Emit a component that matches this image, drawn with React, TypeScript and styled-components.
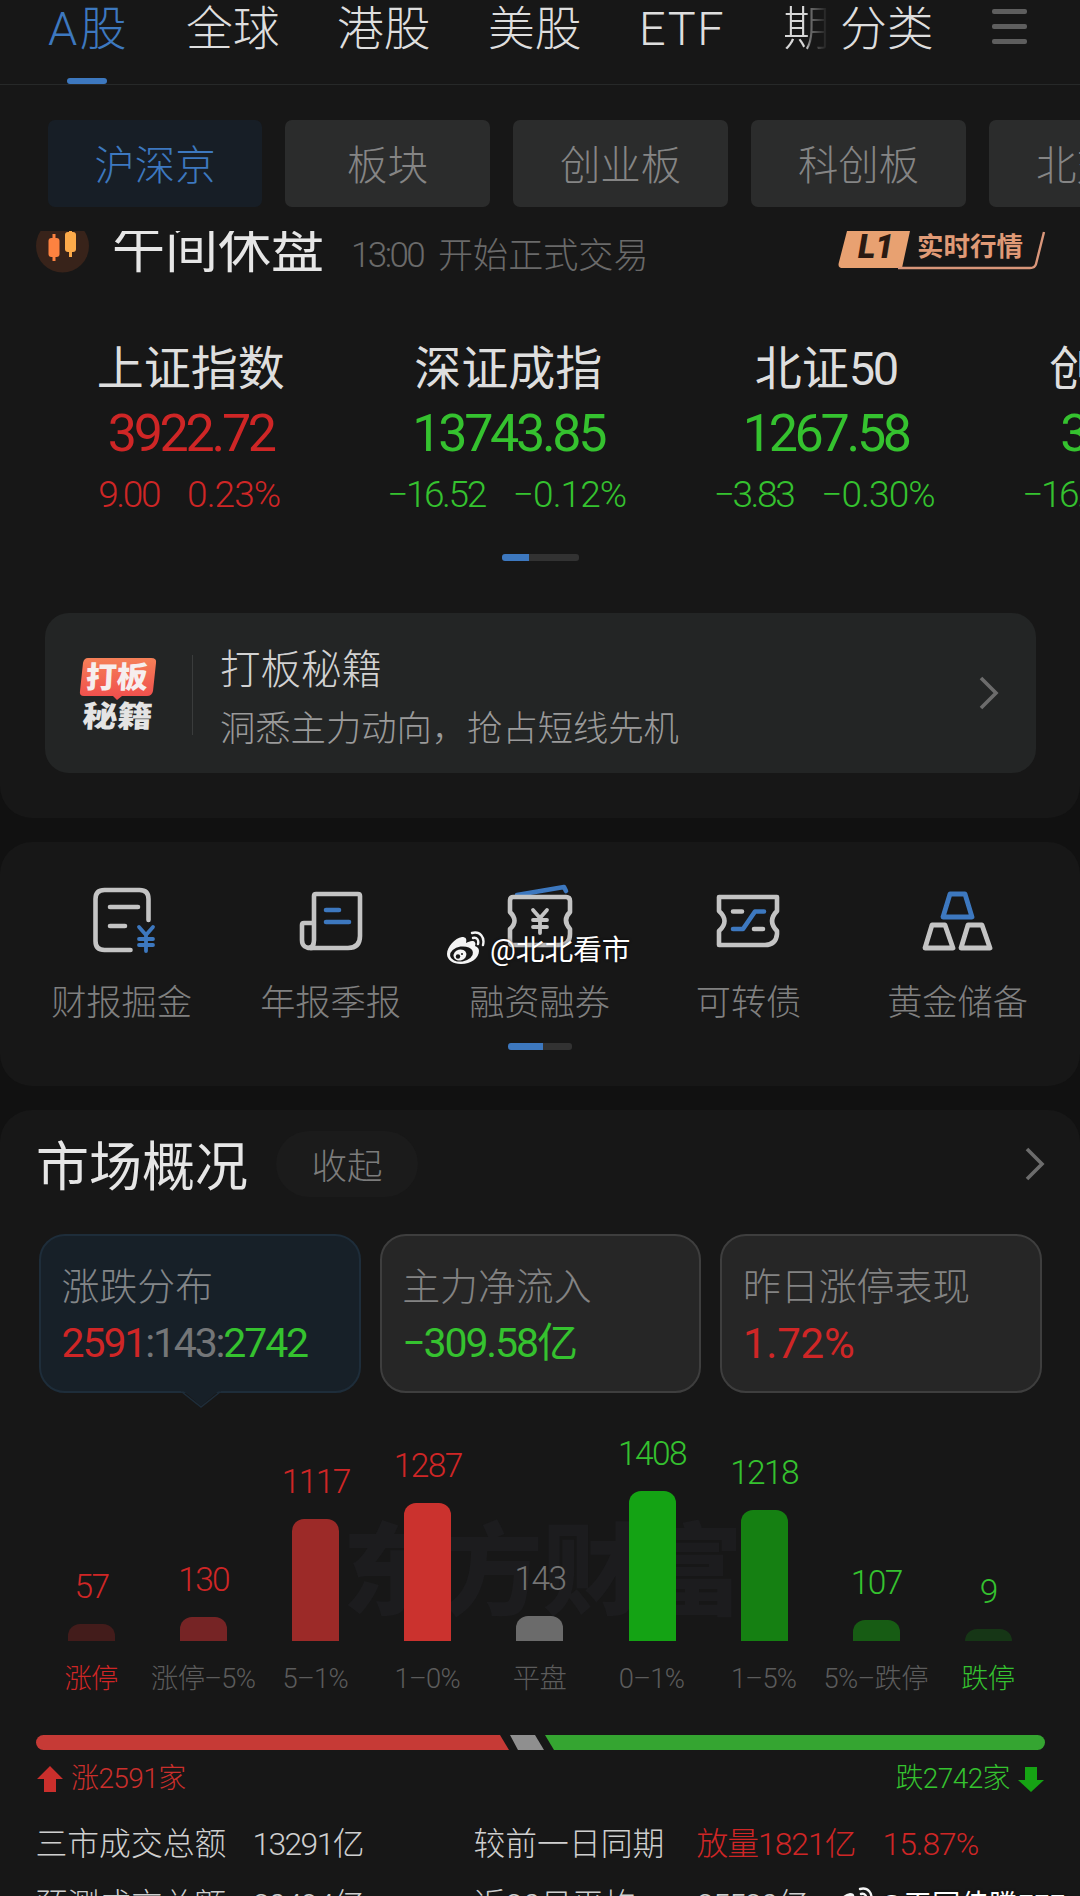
import React from "react";
import styled, { createGlobalStyle } from "styled-components";

const RED = "#cf2626";
const GREEN = "#35c22f";
const BLUE = "#3d78bf";

const GlobalStyle = createGlobalStyle`
  * { box-sizing: border-box; }
  html, body { margin: 0; padding: 0; background: #111111; }
  body {
    width: 1080px; height: 1896px; overflow: hidden;
    font-family: Roboto, "Noto Sans CJK SC", sans-serif;
    font-weight: 300;
    color: #dcdcdc;
  }
`;

const Screen = styled.main`
  position: relative;
  width: 1080px;
  height: 1896px;
  overflow: hidden;
  display: flex;
  flex-direction: column;
  gap: 24px;
`;

const Panel = styled.section<{ $h: number; $first?: boolean }>`
  flex: none;
  height: ${(p) => p.$h}px;
  background: #171717;
  border-radius: ${(p) => (p.$first ? "0 0 32px 32px" : "32px")};
  overflow: hidden;
`;

const Text = styled.span<{ $size: number; $color?: string; $ls?: number; $w?: number }>`
  display: inline-block;
  white-space: pre;
  font-size: ${(p) => p.$size}px;
  line-height: ${(p) => Math.round(p.$size * 1.2)}px;
  letter-spacing: ${(p) => p.$ls ?? 0}px;
  font-weight: ${(p) => p.$w ?? 300};
  color: ${(p) => p.$color ?? "inherit"};
`;

/* top navigation */
const Nav = styled.nav`
  height: 85px;
  display: flex;
  align-items: flex-start;
  border-bottom: 1px solid #272929;
  padding-left: 48px;
`;
const NavItem = styled.div<{ $width: number; $active?: boolean; $fade?: boolean; $ls?: number }>`
  flex: none;
  width: ${(p) => p.$width}px;
  height: 84px;
  font-size: 46.8px;
  line-height: 58px;
  letter-spacing: ${(p) => p.$ls ?? 0}px;
  white-space: nowrap;
  color: ${(p) => (p.$active ? BLUE : "#dedede")};
  ${(p) =>
    p.$fade &&
    `background: linear-gradient(90deg, #d8d8d8 50%, #6a6a6a 60%, #262626 92%) no-repeat 0 0 / 46px 100%;
     -webkit-background-clip: text; background-clip: text; color: transparent;`}
`;
const Underline = styled.div`
  width: 40px;
  height: 6px;
  margin: 20px 0 0 19px;
  border-radius: 3px;
  background: ${BLUE};
`;
const MenuIcon = styled.div`
  width: 35px;
  margin-top: 9px;
  display: flex;
  flex-direction: column;
  gap: 10px;
  i { height: 5px; border-radius: 2px; background: #5e5e5e; }
`;

/* market chips */
const Chips = styled.div`
  display: flex;
  gap: 23px;
  padding: 35px 0 0 48px;
  height: 146px;
`;
const Chip = styled.div<{ $width: number; $active?: boolean }>`
  flex: none;
  width: ${(p) => p.$width}px;
  height: 87px;
  line-height: 93px;
  text-align: center;
  font-size: 40.4px;
  border-radius: 7px;
  background: ${(p) => (p.$active ? "#171e26" : "#2b2c2c")};
  color: ${(p) => (p.$active ? BLUE : "#858585")};
`;

/* session status */
const StatusRow = styled.div`
  height: 44px;
  overflow: hidden;
  display: flex;
  align-items: flex-start;
  padding-left: 36px;
`;
const StatusIcon = styled.svg`
  flex: none;
  width: 53px;
  height: 44px;
  margin-right: 23px;
`;
const StatusTitle = styled.div`
  width: 239px;
  margin-top: -13px;
  font-size: 53px;
  line-height: 64px;
  font-weight: 400;
  color: #e6e6e6;
  white-space: nowrap;
`;
const StatusHint = styled.div`
  display: flex;
  gap: 15px;
  width: 487px;
  margin-top: 4px;
`;
const QuoteBadge = styled.div`
  position: relative;
  width: 208px;
  height: 40px;
  color: #e09a76;
  svg { display: block; }
`;
const BadgeText = styled.span`
  position: absolute;
  left: 79px;
  top: 1px;
  font-size: 26.5px;
  line-height: 30px;
  font-weight: 600;
  white-space: nowrap;
`;
const BadgeLevel = styled.span`
  position: absolute;
  left: 20px;
  top: -1px;
  font: italic 900 33px/34px Roboto, "Liberation Sans", sans-serif;
  color: #2a1a12;
`;

/* indices */
const Indices = styled.div`
  display: flex;
  height: 279px;
  padding-top: 63px;
  margin-left: 32px;
`;
const IndexCol = styled.div<{ $color: string }>`
  flex: none;
  width: 317.5px;
  display: flex;
  flex-direction: column;
  align-items: center;
  color: ${(p) => p.$color};
`;
const IndexName = styled.div`
  font-size: 47px;
  line-height: 62px;
  font-weight: 400;
  color: #dedede;
  white-space: nowrap;
  span { letter-spacing: -2.4px; }
`;
const IndexValue = styled.div`
  margin-top: 2px;
  font-size: 52px;
  line-height: 64px;
  font-weight: 400;
  letter-spacing: -3.3px;
`;
const IndexChange = styled.div`
  margin-top: 7px;
  margin-left: -3px;
  display: flex;
  gap: 28px;
  font-size: 37px;
  line-height: 44px;
  letter-spacing: -2.4px;
  white-space: nowrap;
`;
const IndexPercent = styled.span`
  letter-spacing: -0.9px;
`;
const Pager = styled.div<{ $width: number; $on: number }>`
  width: ${(p) => p.$width}px;
  height: 7px;
  margin: 0 auto;
  border-radius: 3px;
  background: linear-gradient(90deg, ${BLUE} ${(p) => p.$on}px, #323232 ${(p) => p.$on}px);
`;

/* promo */
const Promo = styled.div`
  display: flex;
  align-items: center;
  width: 991px;
  height: 160px;
  margin: 52px 0 0 45px;
  border-radius: 24px;
  background: #232525;
`;
const PromoIcon = styled.svg`
  width: 80px;
  height: 80px;
  margin-left: 33px;
`;
const Divider = styled.div`
  width: 1px;
  height: 80px;
  margin: 4px 27px 0 34px;
  background: #3a3c3c;
`;
const PromoText = styled.div`
  flex: 1;
  display: flex;
  flex-direction: column;
  gap: 13px;
  padding-top: 10px;
`;
const Chevron = styled.svg<{ $mr: number }>`
  width: 22px;
  height: 36px;
  margin-right: ${(p) => p.$mr}px;
`;

/* shortcuts */
const Shortcuts = styled.div`
  display: flex;
  margin: 37px 0 0 17px;
  height: 164px;
`;
const Shortcut = styled.div`
  width: 209px;
  display: flex;
  flex-direction: column;
  align-items: center;
  gap: 23px;
  svg { width: 80px; height: 80px; }
`;

/* overview */
const OverviewHead = styled.div`
  display: flex;
  align-items: center;
  height: 66px;
  margin: 21px 34px 0 36px;
`;
const OverviewTitle = styled.h2`
  margin: 8px 0 0;
  font-size: 53px;
  line-height: 64px;
  font-weight: 400;
  color: #e6e6e6;
`;
const Pill = styled.div`
  width: 142px;
  height: 66px;
  margin: 0 auto 0 28px;
  border-radius: 33px;
  background: #1b1b1b;
  text-align: center;
  font-size: 35.5px;
  line-height: 72px;
  color: #7c7c7c;
`;
const Stats = styled.div`
  display: flex;
  gap: 19px;
  margin: 37px 0 0 39px;
`;
const Stat = styled.div<{ $active?: boolean }>`
  position: relative;
  width: 321.7px;
  height: 159px;
  padding: 29px 0 0 20.5px;
  border-radius: 26px;
  border: 2px solid ${(p) => (p.$active ? "#1e2d3a" : "#3e3e3e")};
  background: ${(p) => (p.$active ? "#172028" : "#262626")};
  display: flex;
  flex-direction: column;
  gap: 9px;
`;
const Pointer = styled.svg`
  position: absolute;
  left: 139px;
  top: 154px;
  width: 42px;
  height: 18px;
`;
const Chart = styled.div`
  position: relative;
  display: flex;
  height: 248px;
  margin-left: 35.5px;
`;
const Watermark = styled.div`
  position: absolute;
  left: 307px;
  top: 115px;
  font-size: 100px;
  line-height: 130px;
  font-weight: 900;
  color: #1c1c1e;
  white-space: nowrap;
`;
const BarCol = styled.div`
  position: relative;
  width: 112.1px;
  display: flex;
  flex-direction: column;
  justify-content: flex-end;
  align-items: center;
`;
const Bar = styled.div<{ $h: number; $color: string }>`
  width: 47px;
  height: ${(p) => p.$h}px;
  margin-top: 17px;
  border-radius: 12px 12px 0 0;
  background: ${(p) => p.$color};
`;
const AxisRow = styled.div`
  display: flex;
  margin: 21px 0 0 35px;
  height: 34px;
`;
const AxisLabel = styled.div<{ $color: string }>`
  width: 112.1px;
  display: flex;
  justify-content: center;
  white-space: nowrap;
  font-size: 27.3px;
  line-height: 35px;
  letter-spacing: -0.7px;
  color: ${(p) => p.$color};
`;
const RatioBar = styled.svg`
  display: block;
  width: 1009px;
  height: 15px;
  margin: 39px 0 0 36px;
`;
const Legend = styled.div`
  display: flex;
  align-items: center;
  justify-content: space-between;
  height: 36px;
  margin: 11px 35px 0 36px;
`;
const LegendItem = styled.div<{ $color: string }>`
  display: flex;
  align-items: center;
  gap: 7px;
  color: ${(p) => p.$color};
  svg { width: 28px; height: 28px; }
`;
const Turnover = styled.div`
  display: grid;
  grid-template-columns: 217px 221px 223px 186px 1fr;
  grid-auto-rows: 61px;
  align-items: center;
  margin: 16px 0 0 35.5px;
`;

/* credit overlay */
const Credit = styled.div<{ $x: number; $y: number }>`
  position: absolute;
  left: ${(p) => p.$x}px;
  top: ${(p) => p.$y}px;
  display: flex;
  align-items: flex-start;
  gap: 5px;
  color: #fff;
  text-shadow: 0 0 3px rgba(0, 0, 0, 0.6);
  svg { width: 39px; height: 34px; }
  span { margin-top: 2px; }
`;

const Weibo = () => (
  <svg viewBox="0 0 39 34">
    <path
      d="M16 6C9 7 1 16 1 23c0 6 6 10 14 10 10 0 18-6 18-13 0-3-2-4-4-5 1-3 0-5-3-5-2 0-4 1-6 2 1-4 0-6-4-6z"
      fill="#f4f4f4"
    />
    <ellipse cx="15.500" cy="23" rx="11.500" ry="7.500" fill="#171717" transform="rotate(-8 15.500 23)" />
    <ellipse cx="14" cy="24" rx="6.500" ry="5.500" fill="#f4f4f4" transform="rotate(-15 14 24)" />
    <circle cx="12" cy="25.500" r="2.200" fill="#171717" />
    <circle cx="16" cy="23" r="1" fill="#171717" />
    <path d="M26 2c8-2 13 4 11 12M27 7c4-1 6 2 5 6" fill="none" stroke="#f4f4f4" strokeWidth="2.400" strokeLinecap="round" />
  </svg>
);

const W = "#c4c4c4";
const ic = { fill: "none", strokeWidth: 4.6, strokeLinecap: "round", strokeLinejoin: "round" } as const;

const shortcuts = [
  {
    label: "财报掘金",
    icon: (
      <svg viewBox="0 0 80 80" {...ic}>
        <path d="M68 41V20q0-9-9-9H24q-9 0-9 9v42q0 9 9 9h26" transform="translate(-1.500 0)" stroke={W} />
        <path d="M28 28h28M28 47h15" stroke={W} />
        <path d="M57 48l7 8 7-8M64 56v16M57 60h14M57 66h14" stroke={BLUE} strokeWidth="3.800" />
      </svg>
    ),
  },
  {
    label: "年报季报",
    icon: (
      <svg viewBox="0 0 80 80" {...ic}>
        <path d="M22 69q-11 1-11-8V46q0-2 2-2h10M23 61V17q0-2 2-2h42q2 0 2 2v40q0 12-12 12H17q6 0 6-8z" stroke={W} />
        <path d="M35 31h13M35 43h23" stroke={BLUE} />
      </svg>
    ),
  },
  {
    label: "融资融券",
    icon: (
      <svg viewBox="0 0 80 80" {...ic}>
        <path d="M17 16L64 8l2 4" stroke={BLUE} />
        <path d="M13 18h53q4 0 4 4v11q-8 8 0 17v5q0 11-11 11H13q-3 0-3-4V50q9-8 0-17V22q0-4 3-4z" stroke={W} />
        <path d="M33 31l7 8 7-8M40 39v15M33 41h14M33 48h14" stroke={W} strokeWidth="3.800" />
      </svg>
    ),
  },
  {
    label: "可转债",
    icon: (
      <svg viewBox="0 0 80 80" {...ic}>
        <path d="M10 18h58v14q-10 10 0 20v3q-1 11-12 11H10V52q11-10 0-20z" stroke={W} />
        <path d="M24 32.500h9M45 50h9" stroke={W} />
        <path d="M24 50h10l12-17.500h9" stroke={BLUE} />
      </svg>
    ),
  },
  {
    label: "黄金储备",
    icon: (
      <svg viewBox="0 0 80 80" {...ic} strokeWidth="4.800">
        <path d="M32 15h15l7 23H25z" stroke={BLUE} />
        <path d="M14 46h13l8 23H7zM50 46h14l8 23H43z" stroke={W} />
      </svg>
    ),
  },
];

const indices = [
  { name: "上证指数", value: "3922.72", diff: "9.00", pct: "0.23%", color: RED },
  { name: "深证成指", value: "13743.85", diff: "−16.52", pct: "−0.12%", color: GREEN },
  { name: "北证", suffix: "50", value: "1267.58", diff: "−3.83", pct: "−0.30%", color: GREEN },
  { name: "创业板指", value: "3887.21", diff: "−16.94", pct: "−0.43%", color: GREEN },
];

const bars = [
  { n: 57, h: 17, axis: "涨停", fill: "#431c1b", text: RED, axisColor: RED },
  { n: 130, h: 24, axis: "涨停–5%", fill: "#762425", text: RED },
  { n: 1117, h: 122, axis: "5–1%", fill: "#9c2a28", text: RED },
  { n: 1287, h: 138, axis: "1–0%", fill: "#cb322e", text: RED },
  { n: 143, h: 25, axis: "平盘", fill: "#6b6b6b", text: "#747474" },
  { n: 1408, h: 150, axis: "0–1%", fill: "#14a314", text: GREEN },
  { n: 1218, h: 131, axis: "1–5%", fill: "#158012", text: GREEN },
  { n: 107, h: 21, axis: "5%–跌停", fill: "#175c14", text: GREEN },
  { n: 9, h: 12, axis: "跌停", fill: "#163616", text: GREEN, axisColor: GREEN },
];

const Arrow = () => (
  <svg viewBox="0 0 28 28" fill="none" stroke="none">
    <path d="M14 1L27 14H20V27H8V14H1z" fill="currentColor" />
  </svg>
);
const ArrowDown = () => (
  <svg viewBox="0 0 28 28">
    <path d="M14 27L27 15H20V2H8V15H1z" fill="#16a314" />
  </svg>
);
const Right = ({ mr }: { mr: number }) => (
  <Chevron $mr={mr} viewBox="0 0 22 36">
    <path d="M3 3l15 15L3 33" fill="none" stroke="#6c6c6c" strokeWidth="3.600" />
  </Chevron>
);

export default function App() {
  return (
    <Screen>
      <GlobalStyle />
      <Panel $h={818} $first>
        <Nav>
          <NavItem $width={138} $active $ls={2.5}>
            A股
            <Underline />
          </NavItem>
          <NavItem $width={151}>全球</NavItem>
          <NavItem $width={151}>港股</NavItem>
          <NavItem $width={151}>美股</NavItem>
          <NavItem $width={144} $ls={1.6}>ETF</NavItem>
          <NavItem $width={57} $fade>期</NavItem>
          <NavItem $width={152}>分类</NavItem>
          <MenuIcon><i /><i /><i /></MenuIcon>
        </Nav>
        <Chips>
          <Chip $width={214} $active>沪深京</Chip>
          <Chip $width={205}>板块</Chip>
          <Chip $width={215}>创业板</Chip>
          <Chip $width={215}>科创板</Chip>
          <Chip $width={215}>北交所</Chip>
        </Chips>
        <StatusRow>
          <StatusIcon viewBox="0 0 53 44">
            <circle cx="26.500" cy="15" r="26.500" fill="#38231a" />
            <path d="M18 3v27" stroke="#fd8240" strokeWidth="3" />
            <rect x="12.500" y="7" width="11" height="19" rx="3" fill="#fd8240" />
            <path d="M34.500-2v28" stroke="#fdaa4a" strokeWidth="3" />
            <rect x="29" y="1" width="11" height="20" rx="3" fill="#fdaa4a" />
          </StatusIcon>
          <StatusTitle>午间休盘</StatusTitle>
          <StatusHint>
            <Text $size={35} $color="#6a6a6a" $ls={-2.6}>13:00</Text>
            <Text $size={35.1} $color="#6a6a6a">开始正式交易</Text>
          </StatusHint>
          <QuoteBadge>
            <svg width="208" height="40" viewBox="0 0 208 40">
              <path d="M9 0H72L64 37H5Q-1 37 1 31z" fill="#e8a171" />
              <path d="M60 37H192Q197 37 198 33L206 1" fill="none" stroke="#d9967a" strokeWidth="2.400" />
            </svg>
            <BadgeLevel>L1</BadgeLevel>
            <BadgeText>实时行情</BadgeText>
          </QuoteBadge>
        </StatusRow>
        <Indices>
          {indices.map((i) => (
            <IndexCol key={i.name} $color={i.color}>
              <IndexName>
                {i.name}
                {i.suffix && <span>{i.suffix}</span>}
              </IndexName>
              <IndexValue>{i.value}</IndexValue>
              <IndexChange>
                <span>{i.diff}</span>
                <IndexPercent>{i.pct}</IndexPercent>
              </IndexChange>
            </IndexCol>
          ))}
        </Indices>
        <Pager $width={77} $on={27} />
        <Promo>
          <PromoIcon viewBox="0 0 80 80">
            <defs>
              <linearGradient id="tag" x1="0" y1="0" x2="0" y2="1">
                <stop offset="0" stopColor="#f58058" />
                <stop offset="1" stopColor="#f04c4c" />
              </linearGradient>
            </defs>
            <path d="M10 5H73Q79 5 78 10L75 38Q74 43 69 43H44L39 47L35 43H6Q1 43 2 38L5 10Q6 5 10 5z" fill="url(#tag)" />
            <g fontFamily="Noto Sans CJK SC" fontWeight="900" fontSize="30" fill="#f6eeee">
              <text x="9" y="35" transform="skewX(-3)" textLength="62" lengthAdjust="spacingAndGlyphs">打板</text>
              <text x="8" y="74" transform="skewX(-3)" textLength="70" lengthAdjust="spacingAndGlyphs" fill="#e4e4e4">秘籍</text>
            </g>
          </PromoIcon>
          <Divider />
          <PromoText>
            <Text $size={40.5} $color="#d2d2d2">打板秘籍</Text>
            <Text $size={35.3} $color="#9a9a9a">洞悉主力动向，抢占短线先机</Text>
          </PromoText>
          <Right mr={36} />
        </Promo>
      </Panel>

      <Panel $h={244}>
        <Shortcuts>
          {shortcuts.map((s) => (
            <Shortcut key={s.label}>
              {s.icon}
              <Text $size={35.2} $color="#808080">{s.label}</Text>
            </Shortcut>
          ))}
        </Shortcuts>
        <Pager $width={64} $on={35} />
      </Panel>

      <Panel $h={820}>
        <OverviewHead>
          <OverviewTitle>市场概况</OverviewTitle>
          <Pill>收起</Pill>
          <Right mr={0} />
        </OverviewHead>
        <Stats>
          <Stat $active>
            <Text $size={37.9} $color="#838689">涨跌分布</Text>
            <span>
              <Text $size={41} $color={RED} $ls={-2.1} $w={400}>2591</Text>
              <Text $size={41} $color="#747678" $ls={-2.2} $w={400}>:143:</Text>
              <Text $size={41} $color={GREEN} $ls={-2.1} $w={400}>2742</Text>
            </span>
            <Pointer viewBox="0 0 42 18">
              <path d="M1 1.500H4L21 16L38 1.500H41V0H1z" fill="#172028" />
              <path d="M2 2L21 17L40 2" fill="none" stroke="#1e2d3a" strokeWidth="1.500" />
            </Pointer>
          </Stat>
          <Stat>
            <Text $size={37.9} $color="#838383">主力净流入</Text>
            <Text $size={41} $color={GREEN} $ls={-2.1} $w={400}>−309.58亿</Text>
          </Stat>
          <Stat>
            <Text $size={37.9} $color="#838383">昨日涨停表现</Text>
            <Text $size={42} $color={RED} $ls={-0.2} $w={400}>1.72%</Text>
          </Stat>
        </Stats>
        <Chart>
          <Watermark>东方财富</Watermark>
          {bars.map((b) => (
            <BarCol key={b.axis}>
              <Text $size={33.5} $color={b.text} $ls={-1.6}>{b.n}</Text>
              <Bar $h={b.h} $color={b.fill} />
            </BarCol>
          ))}
        </Chart>
        <AxisRow>
          {bars.map((b) => (
            <AxisLabel key={b.axis} $color={b.axisColor ?? "#5c5c5c"}>{b.axis}</AxisLabel>
          ))}
        </AxisRow>
        <RatioBar viewBox="0 0 1009 15">
          <path d="M7.500 0H464L473 15H7.500A7.500 7.500 0 0 1 7.500 0z" fill="#c63a36" />
          <path d="M474 0H499L508 15H482z" fill="#8f8f8f" />
          <path d="M509 0H1001.500A7.500 7.500 0 0 1 1001.500 15H518z" fill="#35a531" />
        </RatioBar>
        <Legend>
          <LegendItem $color="#cb2f2c">
            <Arrow />
            <Text $size={28} $ls={-0.6}>涨2591家</Text>
          </LegendItem>
          <LegendItem $color={GREEN}>
            <Text $size={28} $ls={-0.6}>跌2742家</Text>
            <ArrowDown />
          </LegendItem>
        </Legend>
        <Turnover>
          <Text $size={31.8} $color="#cfcfcf">三市成交总额</Text>
          <Text $size={31.8} $color="#cfcfcf" $ls={-1.6}>13291亿</Text>
          <Text $size={31.8} $color="#cfcfcf">较前一日同期</Text>
          <Text $size={31.8} $color={RED} $ls={-1}>放量1821亿</Text>
          <Text $size={31.8} $color={RED} $ls={-1}>15.87%</Text>
          <Text $size={31.8} $color="#cfcfcf">预测成交总额</Text>
          <Text $size={31.8} $color="#cfcfcf" $ls={-1.6}>20494亿</Text>
          <Text $size={31.8} $color="#cfcfcf">近20日平均</Text>
          <Text $size={31.8} $color="#cfcfcf" $ls={-1.6}>25520亿</Text>
        </Turnover>
      </Panel>

      <Credit $x={446} $y={931}>
        <Weibo />
        <Text $size={28.7} $w={400}>@北北看市</Text>
      </Credit>
      <Credit $x={834} $y={1887}>
        <Weibo />
        <Text $size={28.5} $w={400}>@王同佳腾FFF</Text>
      </Credit>
    </Screen>
  );
}
